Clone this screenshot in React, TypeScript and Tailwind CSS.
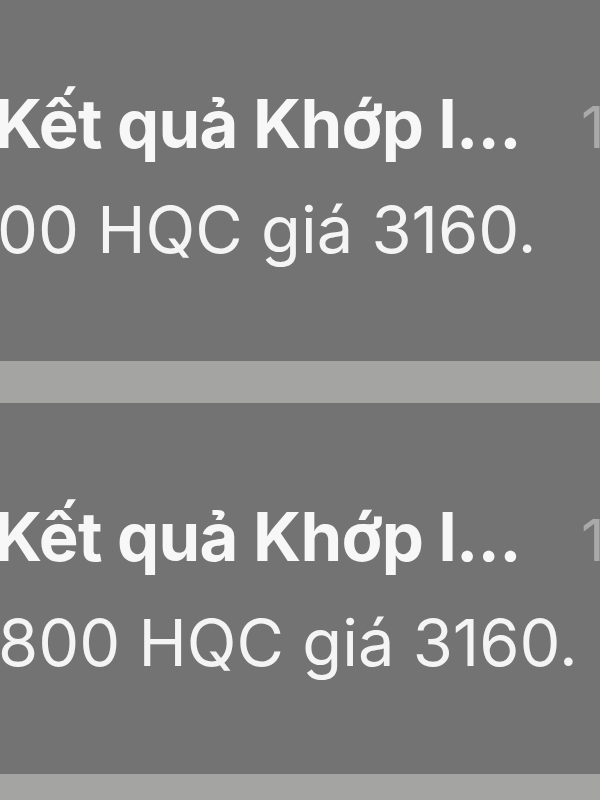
import React from 'react';

interface Notice {
  title: string;
  body: string;
  time: string;
  bodyShift: string;
}

const notices: Notice[] = [
  { title: 'Kết quả Khớp l...', body: '00 HQC giá 3160.', time: '1 giờ trước', bodyShift: '-ml-[3px]' },
  { title: 'Kết quả Khớp l...', body: '800 HQC giá 3160.', time: '1 giờ trước', bodyShift: '-ml-[2px]' },
  { title: 'Kết quả Khớp l...', body: '500 HQC giá 3160.', time: '1 giờ trước', bodyShift: '-ml-[2px]' },
];

export default function App() {
  return (
    <div
      className="h-[800px] w-[600px] overflow-hidden bg-[#a4a5a3] text-white"
      style={{ fontFamily: 'Inter, "Noto Sans", sans-serif' }}
    >
      <div className="-mt-[10px] flex flex-col gap-[42px]">
        {notices.map((n, i) => (
          <div key={i} className="h-[371px] shrink-0 overflow-hidden bg-[#737373] pt-[82px]">
            <div className="flex items-baseline whitespace-nowrap leading-[103px]">
              <span className="-ml-[6px] shrink-0 text-[67px] font-bold tracking-[-0.7px] text-[#f7f7f7]">
                {n.title}
              </span>
              <span className="ml-[60px] shrink-0 text-[58px] text-[#a9a9a9]">{n.time}</span>
            </div>
            <div className={`${n.bodyShift} whitespace-nowrap text-[65px] leading-[102px] text-[#f4f4f4]`}>
              {n.body}
            </div>
          </div>
        ))}
      </div>
    </div>
  );
}
